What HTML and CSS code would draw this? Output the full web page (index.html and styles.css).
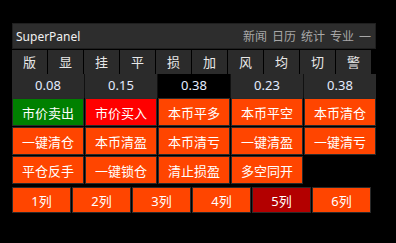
FILE: index.html
```html
<!DOCTYPE html>
<html lang="zh">
<head>
    <meta charset="UTF-8">
    <title>SuperPanel</title>
    <link rel="stylesheet" href="styles.css">
</head>
<body>
    <div class="panel">
        <div class="titlebar">
            <span class="title">SuperPanel</span>
            <ul class="menu">
                <li>新闻</li>
                <li>日历</li>
                <li>统计</li>
                <li>专业</li>
                <li>—</li>
            </ul>
        </div>
        <ul class="tabs">
            <li>版</li>
            <li>显</li>
            <li>挂</li>
            <li>平</li>
            <li>损</li>
            <li>加</li>
            <li>风</li>
            <li>均</li>
            <li>切</li>
            <li>警</li>
        </ul>
        <ul class="values">
            <li>0.08</li>
            <li>0.15</li>
            <li class="current">0.38</li>
            <li>0.23</li>
            <li>0.38</li>
        </ul>
        <div class="buttons">
            <a class="btn green">市价卖出</a>
            <a class="btn red">市价买入</a>
            <a class="btn">本币平多</a>
            <a class="btn">本币平空</a>
            <a class="btn">本币清仓</a>
            <a class="btn">一键清仓</a>
            <a class="btn">本币清盈</a>
            <a class="btn">本币清亏</a>
            <a class="btn">一键清盈</a>
            <a class="btn">一键清亏</a>
            <a class="btn">平仓反手</a>
            <a class="btn">一键锁仓</a>
            <a class="btn">清止损盈</a>
            <a class="btn">多空同开</a>
        </div>
        <div class="cols">
            <a class="btn">1列</a>
            <a class="btn">2列</a>
            <a class="btn">3列</a>
            <a class="btn">4列</a>
            <a class="btn active">5列</a>
            <a class="btn">6列</a>
        </div>
    </div>
</body>
</html>
```

FILE: styles.css
```css
* {
    margin: 0;
    padding: 0;
    box-sizing: border-box;
}
ul {
    list-style: none;
}
body {
    background-color: #000;
    font-family: "Noto Sans", "Noto Sans CJK SC", sans-serif;
    font-size: 13px;
    color: #fff;
}
.panel {
    width: 364px;
    margin: 23px 0 0 12px;
}
.titlebar {
    height: 26px;
    border: 1px solid #1f1f1f;
    background-color: #2d2d2d;
    display: flex;
    align-items: center;
    justify-content: space-between;
    padding: 0 4px 0 3px;
    margin-bottom: 1px;
}
.title {
    font-size: 12px;
    color: #f0f0f0;
}
.menu {
    display: flex;
    gap: 5px;
    font-size: 12px;
    color: #a8a8a8;
}
.tabs {
    display: flex;
    gap: 1px;
}
.tabs li {
    width: 35px;
    height: 24px;
    line-height: 24px;
    text-align: center;
    background-color: #2b2b2b;
    color: #e8e8e8;
    font-size: 13px;
}
.values {
    display: flex;
    height: 24px;
    margin-bottom: 0;
}
.values li {
    flex: 1;
    line-height: 23px;
    text-align: center;
    background-color: #2b2b2b;
    border-left: 1px solid #111;
    color: #e4ecff;
}
.values li:first-child {
    border-left: none;
}
.values li.current {
    background-color: #000;
}
.buttons {
    display: grid;
    grid-template-columns: repeat(5, 72px);
    grid-auto-rows: 28px;
    gap: 1px;
}
.btn {
    display: flex;
    align-items: center;
    justify-content: center;
    background-color: #ff4500;
    border: 1px solid #2a2a2a;
    color: #fff;
    cursor: pointer;
}
.btn.green {
    background-color: #008000;
}
.btn.red {
    background-color: #ff0000;
}
.btn.active {
    background-color: #b30000;
}
.cols {
    display: grid;
    grid-template-columns: repeat(6, 59px);
    height: 26px;
    gap: 1px;
    margin-top: 3px;
}
```
